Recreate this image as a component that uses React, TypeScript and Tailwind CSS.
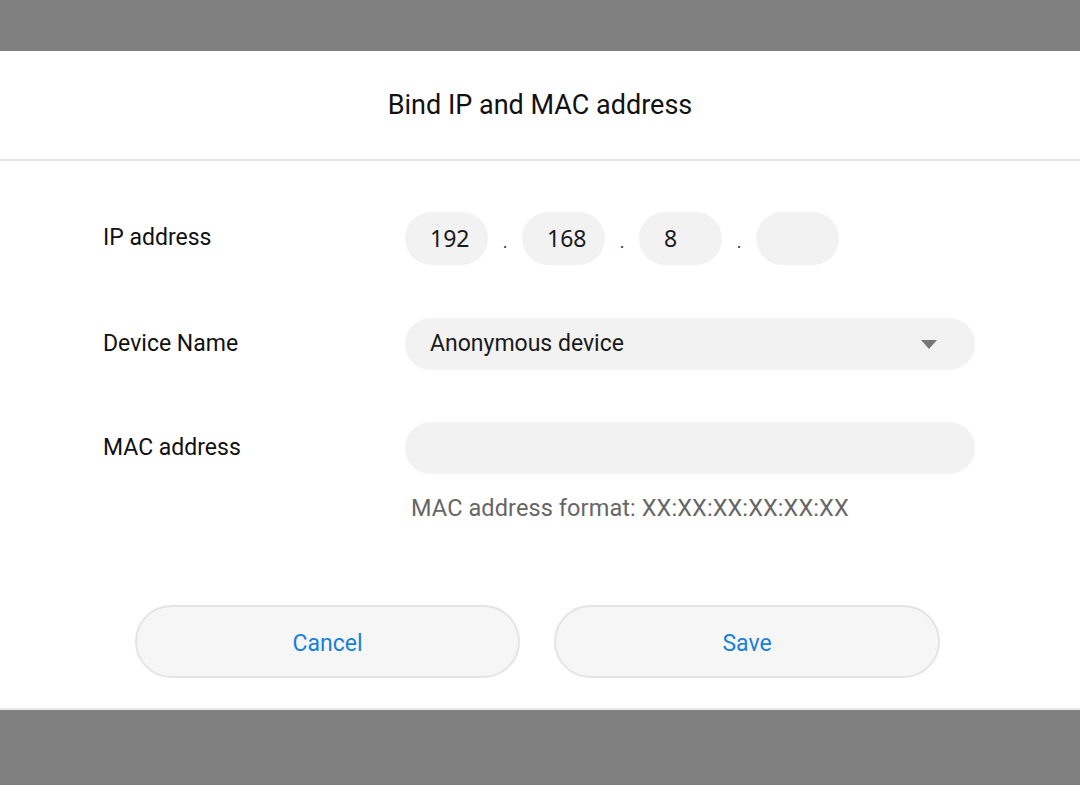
import React from 'react'

const roboto = { fontFamily: 'Roboto, "Liberation Sans", sans-serif' }

function Octet({ value }: { value: string }) {
  return (
    <div
      className="w-[83px] h-[53px] rounded-full bg-[#f2f2f2] flex items-center pl-[25px] text-[23px] text-[#1a1a1a]"
      style={{ fontFamily: '"Noto Sans", "Open Sans", sans-serif' }}
    >
      {value}
    </div>
  )
}

function Dot() {
  return <div className="w-[34px] flex justify-center items-center pt-[6px] text-[18px] text-[#333]">.</div>
}

export default function App() {
  return (
    <div className="w-[1080px] h-[785px] flex flex-col bg-[#808080] overflow-hidden" style={roboto}>
      <div className="h-[51px] shrink-0" />

      <div className="h-[659px] shrink-0 bg-white flex flex-col border-b-2 border-[#e8e8e8]">
        {/* Header */}
        <div className="h-[110px] shrink-0 flex items-center justify-center border-b-2 border-[#e4e4e4]">
          <h1 className="text-[27px] text-[#111] pt-[1px]">Bind IP and MAC address</h1>
        </div>

        {/* Form */}
        <div className="pl-[103px] pt-[51px] grid grid-cols-[302px_570px]">
          <div className="h-[53px] flex items-center text-[23px] text-[#111]">IP address</div>
          <div className="flex items-center">
            <Octet value="192" />
            <Dot />
            <Octet value="168" />
            <Dot />
            <Octet value="8" />
            <Dot />
            <Octet value="" />
          </div>

          <div className="h-[53px] col-span-2" />

          <div className="h-[52px] flex items-center text-[23px] text-[#111]">Device Name</div>
          <div className="h-[52px] rounded-full bg-[#f2f2f2] flex items-center justify-between pl-[25px] pr-[38px]">
            <span className="text-[23px] text-[#1a1a1a]">Anonymous device</span>
            <svg width="16" height="9" viewBox="0 0 16 9">
              <path d="M0 0 H16 L8 9 Z" fill="#777" />
            </svg>
          </div>

          <div className="h-[52px] col-span-2" />

          <div className="h-[52px] flex items-center text-[23px] text-[#111]">MAC address</div>
          <div className="flex flex-col">
            <div className="h-[52px] rounded-full bg-[#f2f2f2]" />
            <div className="pl-[6px] pt-[20px] text-[23.5px] tracking-[0.1px] text-[#666] leading-[28px]">
              MAC address format: XX:XX:XX:XX:XX:XX
            </div>
          </div>
        </div>

        {/* Buttons */}
        <div className="pl-[135px] pt-[83px] flex gap-[34px]">
          <button className="w-[385px] h-[73px] rounded-full bg-[#f6f6f6] border-2 border-[#e4e4e4] pt-[5px] text-[23px] text-[#1780d8]">
            Cancel
          </button>
          <button className="w-[386px] h-[73px] rounded-full bg-[#f6f6f6] border-2 border-[#e4e4e4] pt-[5px] text-[23px] text-[#1780d8]">
            Save
          </button>
        </div>
      </div>

      <div className="flex-1" />
    </div>
  )
}
